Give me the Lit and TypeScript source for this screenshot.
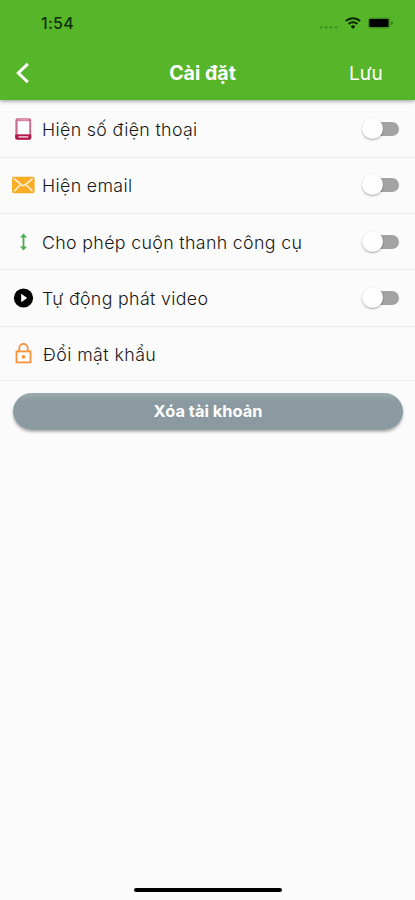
import { LitElement, html, css, svg } from "lit";
import { customElement } from "lit/decorators.js";

const icons = {
  phone: svg`<rect x="3.4" y="1.2" width="15.8" height="21.4" rx="2" fill="#cf6d91"/><path d="M3.2 17.4h16v3.4a2 2 0 0 1-2 2h-12a2 2 0 0 1-2-2z" fill="#b3164b"/><path d="M5.6 4.2h11.6v13H5.6z" fill="#fff"/><path d="M6 2.9h10.8" stroke="#e6aabf" stroke-width="1"/><path d="M6.4 19.9h9.8" stroke="#ecc0ce" stroke-width="1.6"/>`,
  mail: svg`<rect x="0" y="3.7" width="22.6" height="16.6" rx="2" fill="#fbac25"/><path d="M2 5.7l7.5 6.1q1.8 1.4 3.6 0l7.5-6.1M2.2 18.2l6-6.3M20.4 18.2l-6-6.3" fill="none" stroke="#fff3dc" stroke-width="1.5"/>`,
  scroll: svg`<path d="M11.5 5.5v13" stroke="#4ead51" stroke-width="1.8"/><path d="M8 7.6l3.5-4 3.5 4zM8 16.4l3.5 4 3.5-4z" fill="#4ead51"/>`,
  play: svg`<circle cx="11.5" cy="12" r="9.6" fill="#000"/><path d="M9.2 7.8v8.4l6-4.2z" fill="#fff"/>`,
  lock: svg`<rect x="4.5" y="10.4" width="14" height="11" fill="none" stroke="#f8943a" stroke-width="1.8"/><path d="M7.3 10.4V7a4.2 4.2 0 0 1 8.4 0v3.4" fill="none" stroke="#f8943a" stroke-width="1.8"/><circle cx="11.5" cy="15.9" r="1.8" fill="#f8943a"/>`,
};

const rows = [
  { icon: icons.phone, label: "Hiện số điện thoại", cls: "a", toggle: true },
  { icon: icons.mail, label: "Hiện email", cls: "b", toggle: true },
  { icon: icons.scroll, label: "Cho phép cuộn thanh công cụ", cls: "c", toggle: true },
  { icon: icons.play, label: "Tự động phát video", cls: "d", toggle: true },
  { icon: icons.lock, label: "Đổi mật khẩu", cls: "e", toggle: false },
];

@customElement("app-root")
export class AppRoot extends LitElement {
  static styles = css`
    :host { display: flex; flex-direction: column; height: 900px; background: #fbfbfb; font-family: Inter, "Liberation Sans", sans-serif; overflow: hidden; }
    header { flex: none; height: 100px; background: #56b528; box-shadow: 0 1px 4px rgba(0,0,0,.42); z-index: 1; }
    .status { display: flex; justify-content: space-between; align-items: center; height: 46px; padding: 0 20px 0 41px; }
    .time { font-size: 16px; font-weight: 500; line-height: 18px; color: #10300b; letter-spacing: .3px; }
    .status svg { display: block; }
    .bar { display: grid; grid-template-columns: 90px 1fr 90px; align-items: center; height: 54px; color: #fff; }
    .back { padding-left: 15px; display: block; }
    .title { font-size: 19.6px; font-weight: 700; text-align: center; padding-right: 10px; white-space: nowrap; }
    .save { font-size: 19px; font-weight: 400; padding-left: 24px; }
    .row { box-sizing: border-box; flex: none; display: flex; align-items: center; height: 56.4px; padding: 0 16px 0 12px; border-bottom: 1px solid #eeeeee; }
    .a { height: 57.5px; padding-top: 1px; }
    .e { height: 54.5px; }
    .icon { flex: none; width: 23px; height: 24px; }
    .label { flex: 1; margin-left: 7px; padding-top: 2px; font-size: 17.8px; font-weight: 300; line-height: 24px; color: #181818; letter-spacing: .34px; white-space: nowrap; }
    .a .label { padding-top: 3px; }
    .e .label { margin-left: 8px; padding-top: 4px; letter-spacing: .42px; }
    .switch { display: flex; align-items: center; justify-content: flex-end; position: relative; width: 37px; height: 22px; }
    .track { width: 32px; height: 14px; border-radius: 7px; background: #a3a3a3; }
    .thumb { position: absolute; left: 0; top: 0; width: 21px; height: 21px; border-radius: 50%; background: #fdfdfd; box-shadow: 0 1px 2px rgba(0,0,0,.34); }
    .delete { flex: none; height: 37px; margin: 12px 12px 0 13px; border: 0; padding: 0; border-radius: 18.5px; background: linear-gradient(#9aa9ad, #8b9aa0 25%, #8b9aa0); color: #fff; font: 700 16.4px/37px Inter, sans-serif; box-shadow: 0 2px 3px rgba(0,0,0,.3); }
    .home { width: 148px; height: 4px; border-radius: 2px; background: #000; margin: auto 0 8px 134px; }
  `;

  render() {
    return html`
      <header>
        <div class="status">
          <span class="time">1:54</span>
          <svg width="76" height="18" viewBox="0 0 76 18">
            <g fill="#419420"><circle cx="2" cy="13.3" r="1.4"/><circle cx="7" cy="13.3" r="1.4"/><circle cx="12" cy="13.3" r="1.4"/><circle cx="17" cy="13.3" r="1.4"/></g>
            <g fill="none" stroke="#072503" stroke-width="2"><path d="M26.8 7.1a10.6 10.6 0 0 1 14.4 0M29.6 10a6.5 6.5 0 0 1 8.8 0"/></g><path d="M34 15l-2.3-2.6a3.4 3.4 0 0 1 4.6 0z" fill="#072503"/>
            <rect x="49" y="3.5" width="22" height="11" rx="2.6" fill="#419420"/><rect x="50.3" y="5.1" width="19.2" height="7.9" rx=".8" fill="#000"/><path d="M72 6.8q4 2.2 0 4.6z" fill="#34801a"/>
          </svg>
        </div>
        <div class="bar">
          <svg class="back" width="16" height="22" viewBox="0 0 16 22"><path d="M12.8 1.8L3.3 11l9.5 9.2" fill="none" stroke="#fff" stroke-width="3"/></svg>
          <span class="title">Cài đặt</span>
          <span class="save">Lưu</span>
        </div>
      </header>
      ${rows.map((r) => html`
        <div class="row ${r.cls}">
          <svg class="icon" viewBox="0 0 23 24">${r.icon}</svg>
          <span class="label">${r.label}</span>
          ${r.toggle ? html`<div class="switch"><div class="track"></div><div class="thumb"></div></div>` : ""}
        </div>`)}
      <button class="delete">Xóa tài khoản</button>
      <div class="home"></div>
    `;
  }
}
